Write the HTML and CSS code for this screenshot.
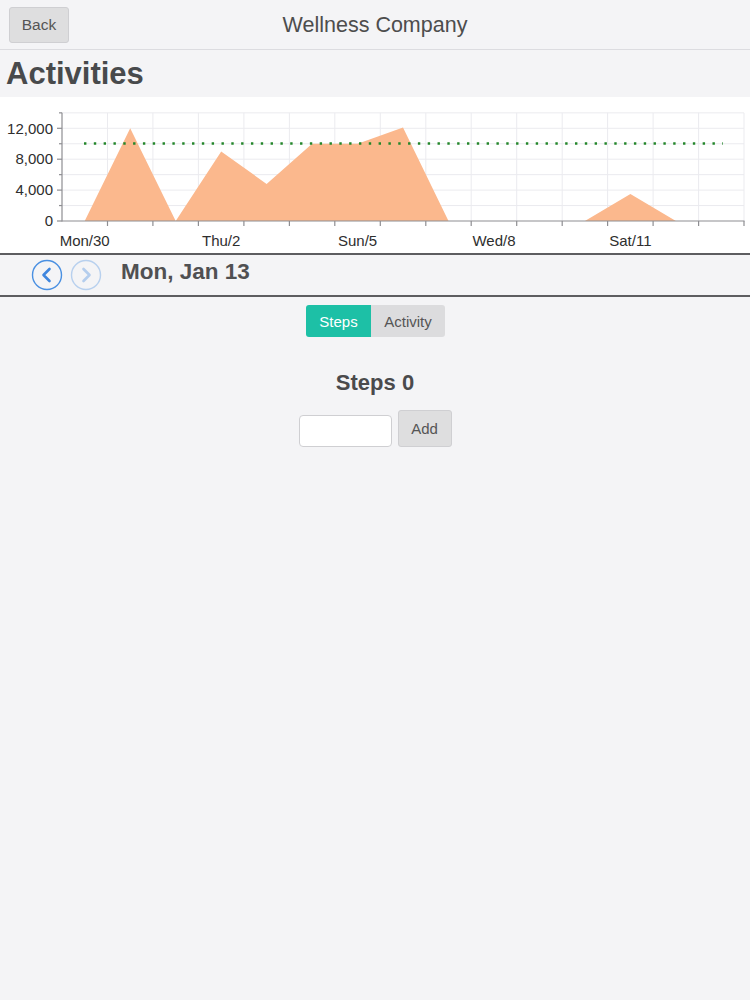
FILE: index.html
```html
<!DOCTYPE html>
<html lang="en">
<head>
<meta charset="utf-8">
<title>Wellness Company</title>
<link rel="stylesheet" href="styles.css">
</head>
<body>
<header class="topbar">
  <div class="left"><button class="back">Back</button></div>
  <div class="title">Wellness Company</div>
  <div class="right"></div>
</header>
<h1 class="page-title">Activities</h1>
<div class="chart">
  <svg width="750" height="156" viewBox="0 0 750 156" xmlns="http://www.w3.org/2000/svg">
    <g class="grid" stroke="#ebebef" stroke-width="1">
      <line x1="62" y1="15.85" x2="744" y2="15.85"/>
      <line x1="62" y1="31.3" x2="744" y2="31.3"/>
      <line x1="62" y1="46.75" x2="744" y2="46.75"/>
      <line x1="62" y1="62.2" x2="744" y2="62.2"/>
      <line x1="62" y1="77.65" x2="744" y2="77.65"/>
      <line x1="62" y1="93.1" x2="744" y2="93.1"/>
      <line x1="62" y1="108.55" x2="744" y2="108.55"/>
      <line x1="107.5" y1="15.85" x2="107.5" y2="124"/>
      <line x1="152.9" y1="15.85" x2="152.9" y2="124"/>
      <line x1="198.4" y1="15.85" x2="198.4" y2="124"/>
      <line x1="243.9" y1="15.85" x2="243.9" y2="124"/>
      <line x1="289.4" y1="15.85" x2="289.4" y2="124"/>
      <line x1="334.8" y1="15.85" x2="334.8" y2="124"/>
      <line x1="380.3" y1="15.85" x2="380.3" y2="124"/>
      <line x1="425.8" y1="15.85" x2="425.8" y2="124"/>
      <line x1="471.2" y1="15.85" x2="471.2" y2="124"/>
      <line x1="516.7" y1="15.85" x2="516.7" y2="124"/>
      <line x1="562.2" y1="15.85" x2="562.2" y2="124"/>
      <line x1="607.6" y1="15.85" x2="607.6" y2="124"/>
      <line x1="653.1" y1="15.85" x2="653.1" y2="124"/>
      <line x1="698.6" y1="15.85" x2="698.6" y2="124"/>
      <line x1="744" y1="15.85" x2="744" y2="124"/>
    </g>
    <polygon fill="#fbb88d" points="84.7,124 130.2,31.3 175.7,124 221.2,54.5 266.6,86.9 312.1,46.75 357.6,46.75 403,30.5 448.5,124 494,124 539.5,124 584.9,124 630.4,97 675.9,124 721.3,124"/>
    <line x1="84" y1="46.5" x2="723" y2="46.5" stroke="#23862a" stroke-width="2.4" stroke-dasharray="2.4 7.42"/>
    <g stroke="#8e8e92" stroke-width="1.2">
      <line x1="62" y1="15.85" x2="62" y2="124.5"/>
      <line x1="62" y1="124" x2="744.5" y2="124"/>
      <line x1="57" y1="124" x2="62" y2="124"/>
      <line x1="59" y1="108.55" x2="62" y2="108.55"/>
      <line x1="57" y1="93.1" x2="62" y2="93.1"/>
      <line x1="59" y1="77.65" x2="62" y2="77.65"/>
      <line x1="57" y1="62.2" x2="62" y2="62.2"/>
      <line x1="59" y1="46.75" x2="62" y2="46.75"/>
      <line x1="57" y1="31.3" x2="62" y2="31.3"/>
      <line x1="59" y1="15.85" x2="62" y2="15.85"/>
      <line x1="107.5" y1="124" x2="107.5" y2="129"/>
      <line x1="152.9" y1="124" x2="152.9" y2="129"/>
      <line x1="198.4" y1="124" x2="198.4" y2="129"/>
      <line x1="243.9" y1="124" x2="243.9" y2="129"/>
      <line x1="289.4" y1="124" x2="289.4" y2="129"/>
      <line x1="334.8" y1="124" x2="334.8" y2="129"/>
      <line x1="380.3" y1="124" x2="380.3" y2="129"/>
      <line x1="425.8" y1="124" x2="425.8" y2="129"/>
      <line x1="471.2" y1="124" x2="471.2" y2="129"/>
      <line x1="516.7" y1="124" x2="516.7" y2="129"/>
      <line x1="562.2" y1="124" x2="562.2" y2="129"/>
      <line x1="607.6" y1="124" x2="607.6" y2="129"/>
      <line x1="653.1" y1="124" x2="653.1" y2="129"/>
      <line x1="698.6" y1="124" x2="698.6" y2="129"/>
      <line x1="744" y1="124" x2="744" y2="129"/>
    </g>
    <g class="ylabels" text-anchor="end">
      <text x="53" y="36.5">12,000</text>
      <text x="53" y="67.4">8,000</text>
      <text x="53" y="98.3">4,000</text>
      <text x="53" y="129.2">0</text>
    </g>
    <g class="xlabels" text-anchor="middle">
      <text x="84.7" y="148.5">Mon/30</text>
      <text x="221.2" y="148.5">Thu/2</text>
      <text x="357.6" y="148.5">Sun/5</text>
      <text x="494" y="148.5">Wed/8</text>
      <text x="630.4" y="148.5">Sat/11</text>
    </g>
  </svg>
</div>
<nav class="daynav">
  <button class="circle-btn" aria-label="Previous day">
    <svg width="32" height="32" viewBox="0 0 32 32"><circle cx="16" cy="16" r="14.5" fill="none" stroke="#4a90e2" stroke-width="1.4"/><path d="M18.5 10 L12.5 16 L18.5 22" fill="none" stroke="#3f86de" stroke-width="2.6" stroke-linecap="round" stroke-linejoin="round"/></svg>
  </button>
  <button class="circle-btn disabled" aria-label="Next day">
    <svg width="32" height="32" viewBox="0 0 32 32"><circle cx="16" cy="16" r="14.5" fill="none" stroke="#4a90e2" stroke-width="1.4"/><path d="M13.5 10 L19.5 16 L13.5 22" fill="none" stroke="#3f86de" stroke-width="2.6" stroke-linecap="round" stroke-linejoin="round"/></svg>
  </button>
  <span class="date">Mon, Jan 13</span>
</nav>
<main class="content">
  <div class="segmented">
    <button class="seg active">Steps</button>
    <button class="seg">Activity</button>
  </div>
  <h2 class="steps">Steps 0</h2>
  <div class="add-row">
    <input class="num" type="text" aria-label="Steps">
    <button class="add">Add</button>
  </div>
</main>
</body>
</html>
```

FILE: styles.css
```css
html, body {
  margin: 0;
  padding: 0;
  background: #f4f4f6;
  font-family: "Liberation Sans", Arial, sans-serif;
  color: #4a4a4a;
}

.topbar {
  display: grid;
  grid-template-columns: 1fr auto 1fr;
  align-items: center;
  height: 50px;
  border-bottom: 1px solid #dcdce0;
  box-sizing: border-box;
}

.topbar .left {
  padding-left: 9px;
}

.back {
  width: 60px;
  height: 36px;
  background: #dededf;
  border: 1px solid #cfcfd2;
  border-radius: 3px;
  font-family: "Liberation Sans", Arial, sans-serif;
  font-size: 15.5px;
  color: #555;
  padding: 0;
  margin-top: 1px;
}

.title {
  font-size: 21.5px;
  color: #4d4d4d;
  padding-top: 1px;
}

.page-title {
  margin: 0;
  height: 47px;
  line-height: 48px;
  padding-left: 6px;
  font-size: 31px;
  font-weight: bold;
  color: #484a4c;
}

.chart {
  background: #fff;
  height: 156px;
}

.chart svg {
  display: block;
}

.ylabels text,
.xlabels text {
  font-family: "Liberation Sans", Arial, sans-serif;
  font-size: 15px;
  fill: #2e2e2e;
}

.daynav {
  display: flex;
  align-items: center;
  height: 40px;
  border-top: 2px solid #5d5d60;
  border-bottom: 2px solid #5d5d60;
  padding-left: 31px;
}

.circle-btn {
  background: none;
  border: none;
  padding: 0;
  margin-right: 7px;
  width: 32px;
  height: 32px;
  display: flex;
}

.circle-btn.disabled {
  opacity: 0.35;
}

.date {
  margin-left: 12px;
  font-size: 22.5px;
  font-weight: bold;
  color: #505052;
  margin-top: -6px;
}

.content {
  display: flex;
  flex-direction: column;
  align-items: center;
  padding-top: 8px;
}

.segmented {
  display: flex;
  height: 32px;
  border-radius: 3px;
  overflow: hidden;
  margin-left: 1px;
}

.seg {
  border: none;
  margin: 0;
  font-family: "Liberation Sans", Arial, sans-serif;
  font-size: 15px;
  padding: 0;
  background: #dcdcde;
  color: #555;
  width: 74px;
}

.seg.active {
  background: #1dc0a6;
  color: #fff;
  width: 65px;
}

.steps {
  margin: 33px 0 0 0;
  font-size: 22px;
  line-height: 26px;
  font-weight: bold;
  color: #4a4a4c;
}

.add-row {
  display: flex;
  align-items: flex-end;
  gap: 6px;
  margin-top: 14px;
}

.num {
  width: 93px;
  height: 32px;
  box-sizing: border-box;
  border: 1px solid #cfcfd2;
  border-radius: 4px;
  background: #fff;
  margin: 0;
}

.add {
  width: 54px;
  height: 37px;
  background: #dededf;
  border: 1px solid #cfcfd2;
  border-radius: 3px;
  font-family: "Liberation Sans", Arial, sans-serif;
  font-size: 15px;
  color: #555;
  padding: 0;
  margin: 0;
}
```
